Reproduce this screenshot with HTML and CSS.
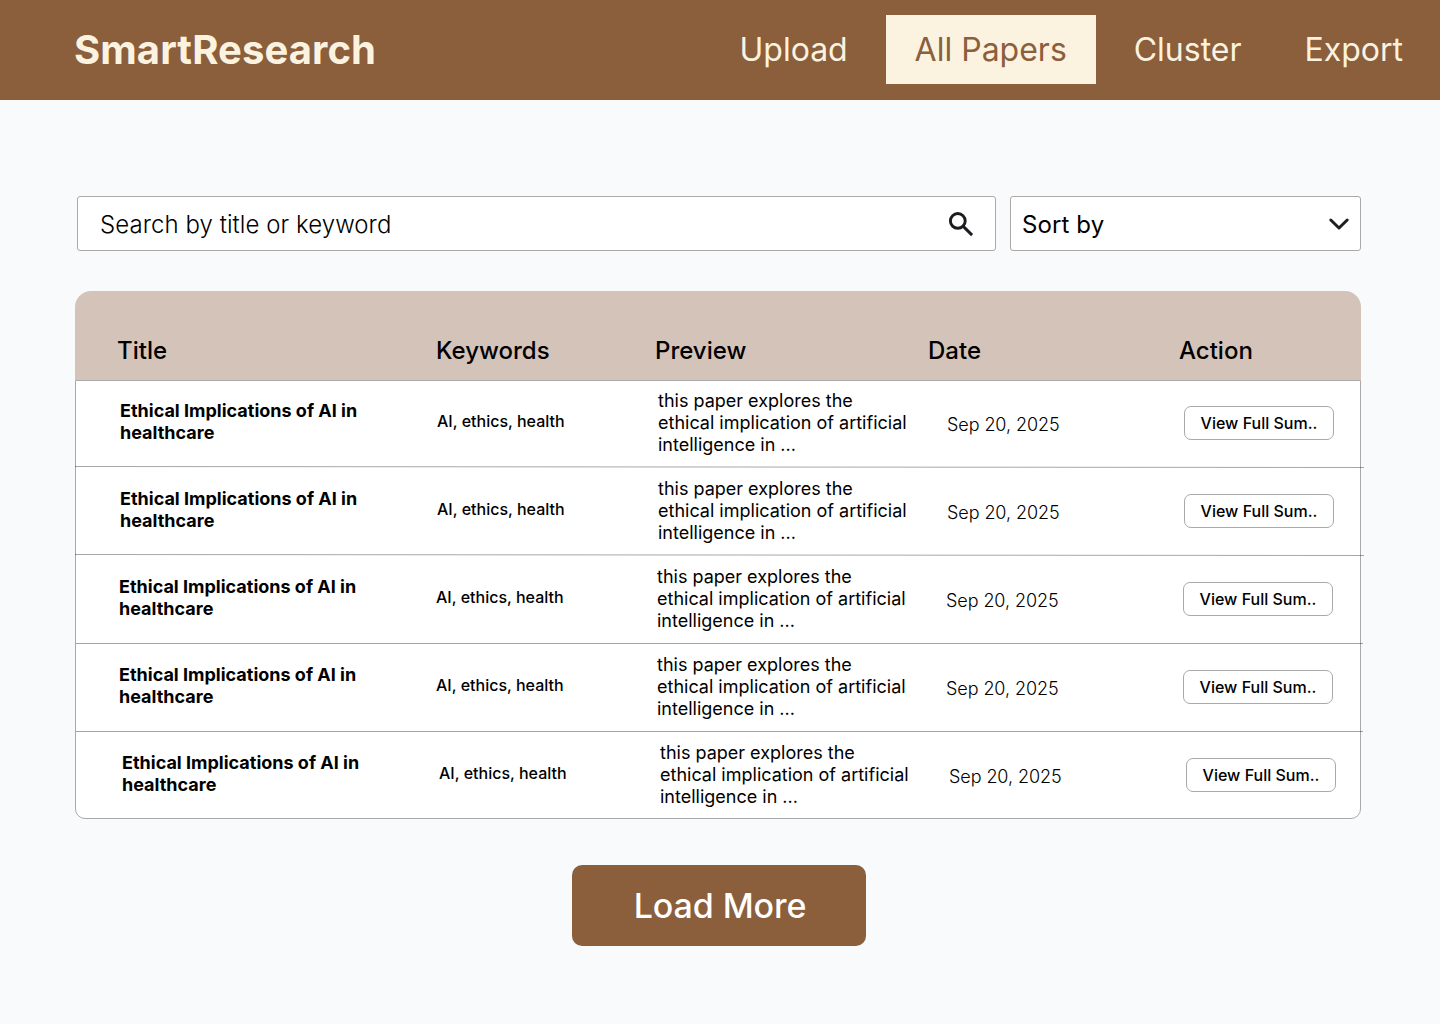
FILE: index.html
```html
<!DOCTYPE html>
<html lang="en">
<head>
<meta charset="utf-8">
<title>SmartResearch</title>
<link rel="stylesheet" href="styles.css">
</head>
<body>
<header class="topbar">
  <div class="logo">SmartResearch</div>
  <nav class="nav">
    <a class="nav-link upload">Upload</a>
    <a class="nav-link active">All Papers</a>
    <a class="nav-link cluster">Cluster</a>
    <a class="nav-link">Export</a>
  </nav>
</header>
<main class="page">
  <div class="filters">
    <div class="search">
      <span>Search by title or keyword</span>
      <svg class="search-icon" width="28" height="28" viewBox="0 0 28 28" fill="none" stroke="#1d1b20"><circle cx="10.8" cy="9.9" r="7.4" stroke-width="2.9"/><path d="M16 15.1L25.1 24.1" stroke-width="2.9"/></svg>
    </div>
    <div class="sort">
      <span>Sort by</span>
      <svg class="chevron" width="22" height="14" viewBox="0 0 22 14" fill="none" stroke="#1e1e1e" stroke-width="3" stroke-linecap="round" stroke-linejoin="round"><path d="M2.8 3L11 11L19.2 3"/></svg>
    </div>
  </div>
  <section class="papers">
    <div class="head">
      <span>Title</span><span>Keywords</span><span>Preview</span><span>Date</span><span>Action</span>
    </div>
    <div class="body">
      <div class="row">
        <div class="title">Ethical Implications of AI in<br>healthcare</div>
        <div class="keywords">AI, ethics, health</div>
        <div class="preview">this paper explores the<br>ethical implication of artificial<br>intelligence in ...</div>
        <div class="date">Sep 20, 2025</div>
        <button class="view">View Full Sum..</button>
      </div>
      <div class="row">
        <svg class="rule" width="1289" height="2" viewBox="0 0 1289 2"><path d="M0 .5L1289 1.5"/></svg>
        <div class="title">Ethical Implications of AI in<br>healthcare</div>
        <div class="keywords">AI, ethics, health</div>
        <div class="preview">this paper explores the<br>ethical implication of artificial<br>intelligence in ...</div>
        <div class="date">Sep 20, 2025</div>
        <button class="view">View Full Sum..</button>
      </div>
      <div class="row shifted">
        <svg class="rule" width="1289" height="2" viewBox="0 0 1289 2"><path d="M0 .5L1289 1.5"/></svg>
        <div class="title">Ethical Implications of AI in<br>healthcare</div>
        <div class="keywords">AI, ethics, health</div>
        <div class="preview">this paper explores the<br>ethical implication of artificial<br>intelligence in ...</div>
        <div class="date">Sep 20, 2025</div>
        <button class="view">View Full Sum..</button>
      </div>
      <div class="row shifted">
        <svg class="rule" width="1289" height="2" viewBox="0 0 1289 2"><path d="M1 1.5H1288"/></svg>
        <div class="title">Ethical Implications of AI in<br>healthcare</div>
        <div class="keywords">AI, ethics, health</div>
        <div class="preview">this paper explores the<br>ethical implication of artificial<br>intelligence in ...</div>
        <div class="date">Sep 20, 2025</div>
        <button class="view">View Full Sum..</button>
      </div>
      <div class="row last">
        <svg class="rule" width="1289" height="2" viewBox="0 0 1289 2"><path d="M1 1.5H1288"/></svg>
        <div class="title">Ethical Implications of AI in<br>healthcare</div>
        <div class="keywords">AI, ethics, health</div>
        <div class="preview">this paper explores the<br>ethical implication of artificial<br>intelligence in ...</div>
        <div class="date">Sep 20, 2025</div>
        <button class="view">View Full Sum..</button>
      </div>
    </div>
  </section>
  <button class="load">Load More</button>
</main>
</body>
</html>
```
FILE: styles.css
```css
* { box-sizing: border-box; }
body {
  margin: 0;
  height: 1024px;
  background: #f9fafc;
  color: #000;
  font-family: Inter, "Liberation Sans", sans-serif;
}
button { font-family: inherit; padding: 0; }
.topbar {
  height: 100px;
  padding: 0 37px 0 74px;
  display: flex;
  justify-content: space-between;
  align-items: center;
  background: #8b5e3c;
  color: #fbf3e0;
}
.logo { font-size: 40px; font-weight: 700; line-height: 48px; letter-spacing: .08px; }
.nav { display: flex; align-items: center; height: 69px; margin-bottom: 1px; }
.nav-link {
  font-size: 32px;
  font-weight: 400;
  line-height: 69px;
  white-space: nowrap;
}
.upload { margin-right: 38px; }
.active {
  width: 210px;
  text-align: center;
  background: #fbf3e0;
  color: #8b5e3c;
  margin-right: 38px;
}
.cluster { margin-right: 63px; }
.page { padding: 96px 79px 0 75px; }
.filters { display: flex; gap: 14px; margin-left: 2px; }
.search, .sort {
  height: 55px;
  display: flex;
  align-items: center;
  justify-content: space-between;
  border: 1px solid #a9a9a9;
  border-radius: 3px;
  background: #fff;
  font-size: 24px;
  line-height: 29px;
}
.search { width: 919px; padding: 2px 20px 0 22px; font-weight: 300; letter-spacing: .06px; }
.sort { width: 351px; padding: 2px 10px 0 11px; letter-spacing: .1px; }
.chevron { margin-bottom: 2px; }
.papers { margin-top: 40px; width: 1286px; }
.head {
  height: 89px;
  display: grid;
  grid-template-columns: 319px 219px 273px 251px 1fr;
  padding: 45px 0 0 42px;
  border-radius: 16px 16px 0 0;
  background: #d4c3b9;
  font-size: 24px;
  font-weight: 500;
  line-height: 29px;
}
.body {
  height: 439px;
  display: grid;
  grid-template-rows: 86px 88px 88px 88px 87px;
  border: 1px solid #a9a9a9;
  border-radius: 0 0 10px 10px;
  background: #fff;
}
.row {
  position: relative;
  display: grid;
  grid-template-columns: 317px 221px 289px 237px 1fr;
  align-items: start;
  padding: 11px 0 0 44px;
}
.row:first-child { padding-top: 9px; }
.shifted { padding-left: 43px; }
.last { padding-left: 46px; }
.rule { position: absolute; left: -1px; top: -1px; stroke: rgba(0, 0, 0, .35); fill: none; overflow: visible; }
.title { margin-top: 10px; font-size: 18px; font-weight: 700; line-height: 22px; }
.keywords { margin-top: 22px; font-size: 16px; font-weight: 500; line-height: 19px; }
.preview { font-size: 18px; line-height: 22px; }
.date { margin-top: 24px; font-size: 18px; font-weight: 300; line-height: 22px; letter-spacing: -.08px; }
.view {
  width: 150px;
  height: 34px;
  margin-top: 16px;
  border: 1px solid #a9a9a9;
  border-radius: 7px;
  background: #fff;
  color: #000;
  font-size: 16px;
  font-weight: 500;
}
.load {
  display: block;
  width: 294px;
  height: 81px;
  margin: 46px 0 0 497px;
  padding-left: 2px;
  border: 0;
  border-radius: 10px;
  background: #8b5e3c;
  color: #fff;
  font-size: 34px;
  font-weight: 500;
  letter-spacing: -.1px;
}
```
